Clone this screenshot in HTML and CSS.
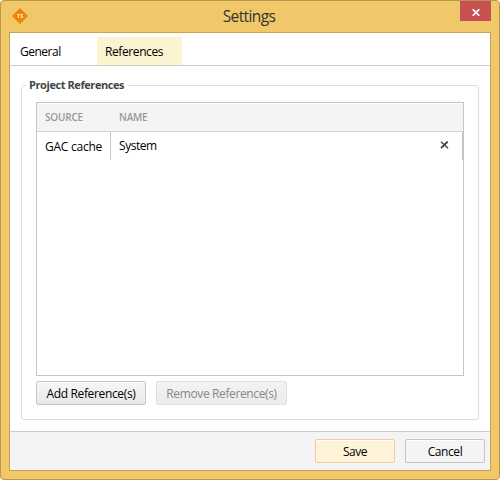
FILE: index.html
```
<!DOCTYPE html>
<html lang="en">
<head>
<meta charset="utf-8">
<title>Settings</title>
<link rel="stylesheet" href="styles.css">
</head>
<body>
<div class="window">
  <header class="titlebar">
    <svg class="logo" width="16" height="16" viewBox="0 0 16 16"><path d="M8 0 16 8 8 16 0 8Z" fill="#f08300"/><path d="M5 6.5H8M6.5 6.5V10M11 6.5H9V8H10.7V9.5H8.5" fill="none" stroke="#fbe3c4" stroke-width="1"/></svg>
    <h1 class="title"><span>Settings</span></h1>
    <button class="close" aria-label="Close"><svg width="8" height="7" viewBox="0 0 8 7"><path d="M.7.2 7.3 6.8M7.3.2.7 6.8" stroke="#fff" stroke-width="1.7"/></svg></button>
  </header>
  <main class="client">
    <nav class="tabs">
      <a class="tab general"><span>General</span></a>
      <a class="tab active"><span>References</span></a>
    </nav>
    <section class="body">
      <fieldset class="group">
        <legend><span>Project References</span></legend>
        <div class="grid">
          <div class="row head">
            <div class="source"><span class="t-source">SOURCE</span></div>
            <div class="name"><span class="t-name">NAME</span></div>
          </div>
          <div class="row item">
            <div class="source"><span class="t-gac">GAC cache</span></div>
            <div class="name"><span class="t-system">System</span>
              <svg class="remove" width="9" height="8" viewBox="0 0 9 8"><path d="M1 .8 8 7.3" stroke="#444" stroke-width="1.4"/><path d="M7.7.5 1 7.2" stroke="#444" stroke-width="1.9"/></svg>
            </div>
          </div>
        </div>
        <div class="actions">
          <button class="btn add"><span>Add Reference(s)</span></button>
          <button class="btn rem" disabled><span>Remove Reference(s)</span></button>
        </div>
      </fieldset>
    </section>
    <footer class="footer">
      <button class="btn save"><span>Save</span></button>
      <button class="btn cancel"><span>Cancel</span></button>
    </footer>
  </main>
</div>
</body>
</html>
```
FILE: styles.css
```
* { box-sizing: border-box; }
body {
  margin: 0;
  background: #fff;
  color: #000;
  font: 12px/16px "Open Sans", "Noto Sans", sans-serif;
}
span { white-space: nowrap; }
.window {
  width: 500px;
  height: 480px;
  padding: 0 8px 8px;
  border: 1px solid #b8984e;
  border-radius: 4px;
  background: #f0c869;
}
.titlebar {
  display: flex;
  height: 31px;
}
.logo { margin: 7px 0 0 3px; }
.title {
  flex: 1;
  margin: 4px 0 0;
  padding-left: 10px;
  text-align: center;
  font-size: 15.5px;
  line-height: 22px;
  font-weight: 400;
  color: #333;
}
.title span { letter-spacing: -0.6px; }
.close {
  display: flex;
  align-items: center;
  justify-content: center;
  width: 31px;
  height: 20px;
  padding: 2px 0 0 1px;
  border: 0;
  background: #c75050;
}
.client {
  display: flex;
  flex-direction: column;
  height: 439px;
  border: 1px solid #c8a351;
  background: #fff;
}
.tabs {
  display: flex;
  height: 33px;
  padding-top: 4px;
  border-bottom: 1px solid #ccc;
}
.tab {
  width: 85px;
  height: 28px;
  padding: 7px 0 0 8px;
}
.general { width: 87px; padding-left: 10px; }
.general span { letter-spacing: -0.5px; }
.active { background: #fcf3d1; }
.active span { letter-spacing: -0.4px; }
.body { height: 365px; padding: 11px 11px 0; }
.group {
  min-width: 0;
  height: 343px;
  margin: 0;
  padding: 9px 14px 0;
  border: 1px solid #d5dfe5;
  border-radius: 3px;
}
legend {
  margin-left: -10px;
  padding: 0 4px 0 3px;
  font-size: 11px;
  font-weight: 700;
  color: #444;
}
legend span { letter-spacing: -0.42px; }
.grid {
  height: 274px;
  border: 1px solid #c5c5c5;
  background: #fff;
}
.row { display: flex; }
.head {
  height: 29px;
  border-top: 1px solid #fff;
  border-bottom: 1px solid #d5d5d5;
  background: #f4f4f4;
  font-size: 10px;
  font-weight: 600;
  line-height: 27px;
  color: #999;
}
.source { width: 74px; padding-left: 8px; }
.name { display: flex; flex: 1; padding-left: 8px; }
.item { height: 28px; line-height: 28px; }
.item .source { border-right: 1px solid #c5c5c5; line-height: 30px; }
.item .name { border-right: 1px solid #c5c5c5; }
.t-source, .t-name { letter-spacing: -0.2px; }
.t-gac { letter-spacing: -0.25px; }
.t-system { letter-spacing: -0.45px; }
.remove { margin: 9px 13px 0 auto; }
.actions { display: flex; gap: 10px; margin-top: 5px; }
.btn {
  height: 24px;
  padding: 1px 0 0;
  border: 1px solid #c5c5c5;
  border-radius: 2px;
  background: linear-gradient(#f7f7f7, #e8e8e8);
  box-shadow: inset 0 1px #fff;
  color: #000;
  font: inherit;
  text-align: center;
}
.add { width: 110px; }
.add span { letter-spacing: -0.35px; }
.rem {
  width: 131px;
  border-color: #e0e0e0;
  background: linear-gradient(#f3f3f3, #ececec);
  box-shadow: none;
  color: #888;
}
.rem span { letter-spacing: -0.38px; }
.footer {
  display: flex;
  flex: 1;
  justify-content: flex-end;
  gap: 10px;
  padding: 7px 5px 0;
  border-top: 1px solid #ccc;
  background: #f4f4f4;
}
.save, .cancel { width: 80px; }
.save { border-color: #f6c9a0; background: #fcf3d8; }
.cancel { background: #f4f4f4; }
.save span { letter-spacing: -0.5px; }
.cancel span { letter-spacing: -0.4px; }
```
